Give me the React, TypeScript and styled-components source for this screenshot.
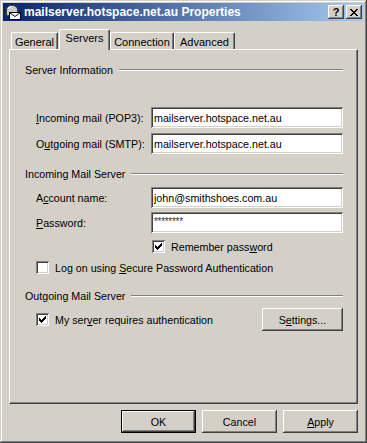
import React from 'react'
import styled, { createGlobalStyle } from 'styled-components'

const GlobalStyle = createGlobalStyle`
  html, body {
    margin: 0;
    padding: 0;
    background: #d4d0c8;
  }
  body {
    font-family: Tahoma, "Liberation Sans", Arial, sans-serif;
    font-size: 10.7px;
    color: #000;
  }
`

const Window = styled.div`
  width: 367px;
  height: 443px;
  box-sizing: border-box;
  padding: 3px;
  display: flex;
  flex-direction: column;
  background: #d4d0c8;
  box-shadow: inset -1px -1px #404040, inset 1px 1px #d4d0c8,
    inset -2px -2px #808080, inset 2px 2px #fff;
`
const TitleBar = styled.div`
  height: 18px;
  display: flex;
  align-items: center;
  padding: 0 2px;
  background: linear-gradient(to right, #0a246a, #a6caf0);
`
const TitleText = styled.span`
  margin-left: 3px;
  color: #fff;
  font-weight: bold;
  font-size: 12px;
  white-space: nowrap;
`
const TitleButtons = styled.div`
  margin-left: auto;
  display: flex;
  gap: 2px;
`
const CaptionButton = styled.div`
  width: 16px;
  height: 14px;
  box-sizing: border-box;
  display: flex;
  align-items: center;
  justify-content: center;
  background: #d4d0c8;
  font-weight: bold;
  font-size: 11px;
  line-height: 14px;
  box-shadow: inset -1px -1px #404040, inset 1px 1px #fff,
    inset -2px -2px #808080, inset 2px 2px #d4d0c8;
`
const Body = styled.div`
  flex: 1;
  display: flex;
  flex-direction: column;
  padding: 0 6px;
`
const TabRow = styled.div`
  height: 20px;
  margin-top: 8px;
  padding-left: 2px;
  display: flex;
  align-items: flex-end;
`
const Tab = styled.div<{ $w: number; $selected?: boolean }>`
  width: ${p => p.$w}px;
  height: ${p => (p.$selected ? 21 : 17)}px;
  margin-bottom: ${p => (p.$selected ? -1 : 0)}px;
  margin-left: ${p => (p.$selected ? 1 : 0)}px;
  position: relative;
  z-index: ${p => (p.$selected ? 1 : 0)};
  box-sizing: border-box;
  display: flex;
  justify-content: center;
  padding-top: ${p => (p.$selected ? 2 : 3)}px;
  font-size: 11px;
  background: #d4d0c8;
  border-top: 1px solid #fff;
  border-left: 1px solid #fff;
  border-right: 1px solid #404040;
  border-radius: 2px 2px 0 0;
  box-shadow: inset -1px 0 #808080;
`
const Panel = styled.div`
  flex: 1;
  display: flex;
  flex-direction: column;
  padding: 0 14px 0 15px;
  border-top: 1px solid #fff;
  border-left: 1px solid #fff;
  border-right: 1px solid #404040;
  border-bottom: 1px solid #404040;
  box-shadow: inset -1px -1px #808080;
`
const GroupTitle = styled.div<{ $top: number }>`
  margin-top: ${p => p.$top}px;
  height: 13px;
  display: flex;
  align-items: center;
  gap: 6px;
  white-space: nowrap;
`
const Etched = styled.div`
  flex: 1;
  border-top: 1px solid #808080;
  border-bottom: 1px solid #fff;
`
const FieldRow = styled.div<{ $top: number }>`
  margin-top: ${p => p.$top}px;
  display: flex;
  align-items: center;
  padding-left: 11px;
`
const Label = styled.label`
  width: 115px;
  white-space: nowrap;
`
const TextInput = styled.input`
  width: 192px;
  height: 21px;
  box-sizing: border-box;
  border: none;
  outline: none;
  padding: 0 3px;
  margin: 0;
  background: #fff;
  font: inherit;
  color: #000;
  box-shadow: inset 1px 1px #808080, inset -1px -1px #fff,
    inset 2px 2px #404040, inset -2px -2px #d4d0c8;
`
const MaskedInput = styled(TextInput)`
  font-size: 10px;
  letter-spacing: -0.3px;
  padding-bottom: 3px;
  color: #333;
`
const CheckRow = styled.div<{ $top: number; $indent: number }>`
  margin-top: ${p => p.$top}px;
  padding-left: ${p => p.$indent}px;
  display: flex;
  align-items: center;
  gap: 6px;
  white-space: nowrap;
`
const Box = styled.span`
  width: 13px;
  height: 13px;
  box-sizing: border-box;
  display: flex;
  align-items: center;
  justify-content: center;
  background: #fff;
  box-shadow: inset 1px 1px #808080, inset -1px -1px #fff,
    inset 2px 2px #404040, inset -2px -2px #d4d0c8;
`
const AuthRow = styled.div`
  margin-top: 6px;
  display: flex;
  align-items: center;
  justify-content: space-between;
`
const Button = styled.button<{ $default?: boolean; $w: number }>`
  width: ${p => p.$w}px;
  height: 23px;
  box-sizing: border-box;
  margin: 0;
  padding: 0;
  font: inherit;
  color: #000;
  background: #d4d0c8;
  border: ${p => (p.$default ? '1px solid #000' : 'none')};
  box-shadow: inset -1px -1px #404040, inset 1px 1px #fff,
    inset -2px -2px #808080, inset 2px 2px #d4d0c8;
`
const ButtonRow = styled.div`
  display: flex;
  justify-content: flex-end;
  gap: 6px;
  padding: 6px 0 7px;
`

function MailIcon () {
  return (
    <svg width='16' height='16' viewBox='0 0 16 16'>
      <path d='M1.5 6 Q1.5 1.5 7 1.5 Q12.5 1.5 12.5 6 V11.5 H1.5 Z' fill='#c8c8c8' stroke='#404040' />
      <path d='M3 5 Q3.5 2.5 7 2.5' fill='none' stroke='#fff' />
      <rect x='4.5' y='8.5' width='11' height='7' fill='#fff' stroke='#000' />
      <path d='M4.5 8.5 L10 12.5 L15.5 8.5' fill='none' stroke='#000' />
    </svg>
  )
}

function CloseGlyph () {
  return (
    <svg width='8' height='7' viewBox='0 0 8 7' shapeRendering='crispEdges'>
      <path d='M0 0h2v1H0z M6 0h2v1H6z M1 1h2v1H1z M5 1h2v1H5z M2 2h4v1H2z M3 3h2v1H3z M2 4h4v1H2z M1 5h2v1H1z M5 5h2v1H5z M0 6h2v1H0z M6 6h2v1H6z' fill='#000' />
    </svg>
  )
}

function CheckBox ({ checked }: { checked?: boolean }) {
  return (
    <Box>
      {checked && (
        <svg width='7' height='7' viewBox='0 0 7 7' shapeRendering='crispEdges'>
          <path d='M6 0h1v1H6z M5 1h2v1H5z M0 2h1v1H0z M4 2h3v1H4z M0 3h2v1H0z M3 3h3v1H3z M0 4h5v1H0z M1 5h3v1H1z M2 6h1v1H2z' fill='#000' />
        </svg>
      )}
    </Box>
  )
}

export default function App () {
  return (
    <>
      <GlobalStyle />
      <Window>
        <TitleBar>
          <MailIcon />
          <TitleText>mailserver.hotspace.net.au Properties</TitleText>
          <TitleButtons>
            <CaptionButton>?</CaptionButton>
            <CaptionButton><CloseGlyph /></CaptionButton>
          </TitleButtons>
        </TitleBar>
        <Body>
          <TabRow>
            <Tab $w={47}>General</Tab>
            <Tab $w={51} $selected>Servers</Tab>
            <Tab $w={64}>Connection</Tab>
            <Tab $w={61}>Advanced</Tab>
          </TabRow>
          <Panel>
            <GroupTitle $top={13}>Server Information<Etched /></GroupTitle>
            <FieldRow $top={31}>
              <Label><u>I</u>ncoming mail (POP3):</Label>
              <TextInput readOnly value='mailserver.hotspace.net.au' />
            </FieldRow>
            <FieldRow $top={5}>
              <Label>O<u>u</u>tgoing mail (SMTP):</Label>
              <TextInput readOnly value='mailserver.hotspace.net.au' />
            </FieldRow>

            <GroupTitle $top={13}>Incoming Mail Server<Etched /></GroupTitle>
            <FieldRow $top={7}>
              <Label>A<u>c</u>count name:</Label>
              <TextInput readOnly value='john@smithshoes.com.au' />
            </FieldRow>
            <FieldRow $top={4}>
              <Label><u>P</u>assword:</Label>
              <MaskedInput readOnly value='********' />
            </FieldRow>
            <CheckRow $top={7} $indent={127}>
              <CheckBox checked />
              <span>Remember pass<u>w</u>ord</span>
            </CheckRow>
            <CheckRow $top={8} $indent={11}>
              <CheckBox />
              <span>Log on using <u>S</u>ecure Password Authentication</span>
            </CheckRow>

            <GroupTitle $top={15}>Outgoing Mail Server<Etched /></GroupTitle>
            <AuthRow>
              <CheckRow $top={0} $indent={11}>
                <CheckBox checked />
                <span>My ser<u>v</u>er requires authentication</span>
              </CheckRow>
              <Button $w={81}>S<u>e</u>ttings...</Button>
            </AuthRow>
          </Panel>
          <ButtonRow>
            <Button $w={75} $default>OK</Button>
            <Button $w={75}>Cancel</Button>
            <Button $w={75}><u>A</u>pply</Button>
          </ButtonRow>
        </Body>
      </Window>
    </>
  )
}
